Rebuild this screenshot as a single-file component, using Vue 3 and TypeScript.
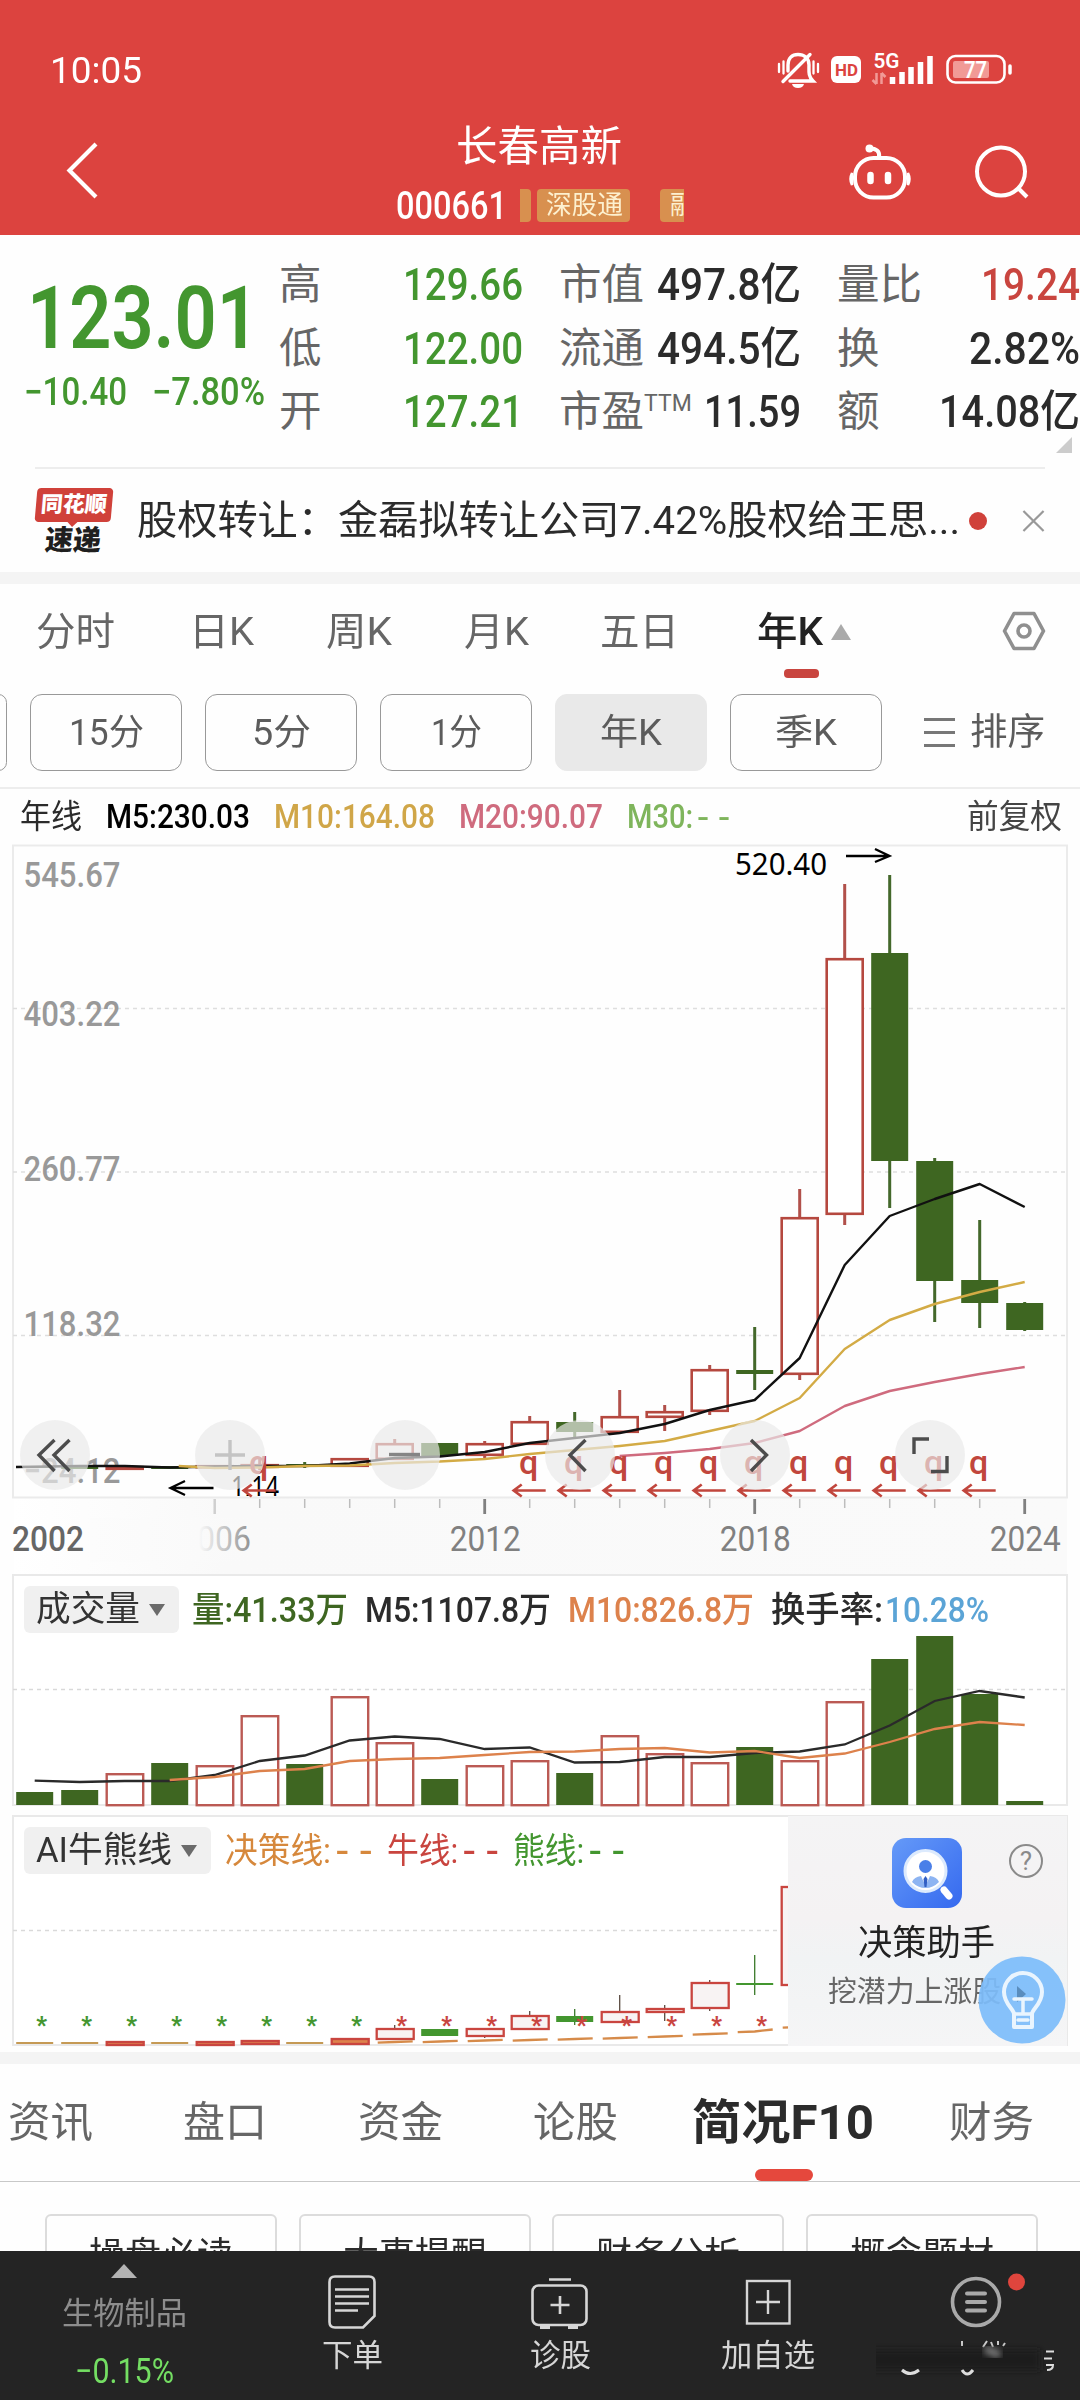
<script setup lang="ts">
interface Candle {
  up: boolean
  top: number
  bottom: number
  high: number
  low: number
}

// Condenses a label horizontally so that it fills exactly the given width.
const vFit = {
  mounted(el: HTMLElement, binding: { value: number }) {
    const natural = el.getBoundingClientRect().width
    el.style.transform = `scaleX(${binding.value / natural})`
    el.style.width = `${binding.value}px`
  },
}

const cx = (i: number): number => 34.7 + 45 * i

const c = (up: boolean, top: number, bottom: number, high = top, low = bottom): Candle => ({
  up, top, bottom, high, low,
})

const candles: Candle[] = [
  c(false, 1466, 1468), c(false, 1466, 1469), c(true, 1466, 1470), c(false, 1466, 1469),
  c(true, 1465, 1468), c(true, 1464, 1468, 1459, 1470), c(false, 1464, 1466, 1462, 1468),
  c(true, 1458, 1467), c(true, 1443, 1460, 1439, 1460), c(false, 1443, 1456),
  c(true, 1443, 1456, 1441, 1458), c(true, 1421, 1445, 1416, 1445), c(false, 1422, 1432, 1412, 1438),
  c(true, 1416, 1433, 1390, 1433), c(true, 1411, 1418, 1405, 1431), c(true, 1369, 1412, 1365, 1415),
  c(false, 1370, 1374, 1327, 1390), c(true, 1217, 1375, 1189, 1380), c(true, 958, 1215, 884, 1225),
  c(false, 953, 1161, 875, 1208), c(false, 1161, 1281, 1158, 1322), c(false, 1280, 1303, 1220, 1328),
  c(false, 1303, 1330, 1302, 1331),
]

const volumes: [boolean, number][] = [
  [false, 1792], [false, 1790], [true, 1773], [false, 1763], [true, 1765], [true, 1715],
  [false, 1764], [true, 1696], [true, 1742], [false, 1779], [true, 1765], [true, 1760],
  [false, 1773], [true, 1735], [true, 1753], [true, 1762], [false, 1747], [true, 1760],
  [true, 1701], [false, 1659], [false, 1636], [false, 1694], [false, 1801],
]

const aiCandles: { i: number; k: Candle }[] = [
  c(false, 2042, 2044), c(false, 2042, 2044), c(true, 2041, 2046), c(false, 2042, 2044),
  c(true, 2041, 2046), c(true, 2040, 2045), c(false, 2042, 2044), c(true, 2038, 2045),
  c(true, 2028, 2040, 2025, 2040), c(false, 2029, 2036), c(true, 2028, 2037, 2028, 2038),
  c(true, 2015, 2030, 2011, 2030), c(false, 2016, 2022, 2009, 2025), c(true, 2011, 2023, 1995, 2023),
  c(true, 2008, 2013, 2005, 2021), c(true, 1982, 2009, 1980, 2011), c(false, 1983, 1985, 1955, 1995),
  c(true, 1886, 1986),
].map((k, i) => ({ i, k }))

const line = (start: number, ys: number[]): string =>
  ys.map((y, n) => `${cx(start + n)},${y}`).join(' ')

const ma5 = '16,1467 ' + line(1, [1466, 1466, 1467.5, 1466.5, 1466, 1466, 1463.5, 1458, 1456.5, 1452,
  1443, 1438, 1433, 1424, 1410, 1400, 1358, 1265, 1216, 1199, 1184, 1207])
const ma10 = line(3.2, [1466]) + ' ' + line(4, [1468, 1467.5, 1466, 1465.5, 1463, 1461.5, 1459, 1454,
  1450, 1446, 1441, 1431, 1421, 1398, 1349, 1320, 1304, 1292, 1282])
const ma20 = line(13, [1456, 1453, 1449, 1443, 1431, 1406, 1391, 1382, 1374, 1367])
const vma5 = line(0, [1780.7, 1782, 1781, 1781, 1775, 1761, 1755.5, 1740.5, 1736.5, 1739, 1749,
  1747.5, 1762.5, 1762, 1757, 1757, 1753, 1751.5, 1744.5, 1725.5, 1701, 1691, 1697.5])
const vma10 = line(3, [1780, 1777, 1771, 1769, 1761, 1759, 1758, 1755, 1752, 1751.5, 1749, 1748,
  1752.5, 1751, 1758, 1753.5, 1742, 1729, 1722, 1725])

const priceLabels = [
  { text: '545.67', y: 887 }, { text: '403.22', y: 1026 }, { text: '260.77', y: 1181 },
  { text: '118.32', y: 1336 }, { text: '−24.12', y: 1483 },
]
const dividends = [5, 11, 12, 13, 14, 15, 16, 17, 18, 19, 20, 21]
const knobs = [55, 230, 405, 580, 755, 930]
const years = [
  { text: '2012', i: 10 }, { text: '2018', i: 16 }, { text: '2024', i: 22 },
]
const trend = [2042, 2041.5, 2040.5, 2040, 2039, 2038, 2036.5, 2034, 2031.5, 2027]

const facts = [
  ['高', '129.66', '市值', '497.8亿', '量比', '19.24'],
  ['低', '122.00', '流通', '494.5亿', '换', '2.82%'],
  ['开', '127.21', '市盈', '11.59', '额', '14.08亿'],
]
const capWidth = [144, 144, 97]
const lastWidth = [99, 111, 141]

const periods = [
  { text: '分时', w: 79 }, { text: '日K', w: 65 }, { text: '周K', w: 66 },
  { text: '月K', w: 65 }, { text: '五日', w: 79 },
]
const minutes = ['15分', '5分', '1分', '年K', '季K']
const minuteWidth = [75, 59, 51, 62, 62]
const cards = ['操盘必读', '大事提醒', '财务分析', '概念题材']
</script>

<template>
  <main class="screen">
    <header class="top">
      <div class="status">
        <span v-fit="92" class="clock fit">10:05</span>
        <svg class="status-icons" width="250" height="50" viewBox="770 45 250 50">
          <g fill="none" stroke="#fff" stroke-width="3.400" stroke-linecap="round">
            <path d="M790 81 H813 C808 76 809 71 809 65 C809 58 804 54.500 798 54.500 C792 54.500 788 58 788 65 V71" />
            <path d="M783 81.500 L810 54.500" />
            <path d="M779 64 v8 M783.500 61.500 v12 M813.500 61.500 v12 M818 64 v8" stroke-width="2.300" />
          </g>
          <path d="M792 84 h12 q-1 4 -6 4 t-6 -4z" fill="#fff" />
          <rect x="831" y="56" width="30" height="27" rx="6" fill="#fff" />
          <text x="835" y="75.500" font-size="16" font-weight="700" fill="#dc433f" textLength="23" lengthAdjust="spacingAndGlyphs">HD</text>
          <text x="873.500" y="68" font-size="20" font-weight="600" fill="#fff" textLength="26" lengthAdjust="spacingAndGlyphs">5G</text>
          <path d="M876.500 73 v11 M872.500 80 l4 4 M881.500 84 v-11 M881.500 73 l4 4" stroke="#f19a96" stroke-width="2.500" fill="none" />
          <path d="M892.500 84 v-7 M902 84 v-12 M911 84 v-17 M920.500 84 v-22 M930 84 v-28" stroke="#fff" stroke-width="5.500" />
          <rect x="947.500" y="56" width="57" height="26.500" rx="8" fill="none" stroke="#fff" stroke-width="2.600" />
          <rect x="953" y="61" width="36" height="17" rx="2" fill="#f19a96" />
          <path d="M1010 66 v7" stroke="#fff" stroke-width="3.500" stroke-linecap="round" />
          <text x="964" y="78" font-size="23" font-weight="600" fill="#fff" textLength="23" lengthAdjust="spacingAndGlyphs">77</text>
        </svg>
      </div>
      <div class="titlebar">
        <svg class="back" width="40" height="66" viewBox="62 137 40 66">
          <path d="M96 144 L69.500 170.500 L96 197" fill="none" stroke="#fff" stroke-width="4.200" />
        </svg>
        <div class="name">
          <h1 v-fit="166" class="fit">长春高新</h1>
          <div class="code">
            <span v-fit="111" class="fit digits">000661</span>
            <i class="tag sliver"></i>
            <span class="tag full"><span v-fit="77" class="fit">深股通</span></span>
            <span class="tag cut">融</span>
          </div>
        </div>
        <svg class="actions" width="200" height="76" viewBox="840 135 200 76">
          <g fill="none" stroke="#fff" stroke-width="4">
            <rect x="855" y="158" width="50" height="39.500" rx="18.500" />
            <path d="M879 157 C880 151 876 148.500 870 148.500" />
            <path d="M870.500 175 v6 M888 175 v6" stroke-width="6.500" stroke-linecap="round" />
            <circle cx="1001" cy="171.500" r="24" />
            <path d="M1018 188 L1027 197" />
          </g>
          <path d="M852 173 q-3 6 0 12z M908 173 q3 6 0 12z" fill="#fff" stroke="#fff" stroke-width="2.500" />
          <circle cx="869.500" cy="148.500" r="4" fill="#fff" />
        </svg>
      </div>
    </header>

    <section class="quote">
      <div class="price">
        <strong v-fit="232" class="fit">123.01</strong>
        <div class="change">
          <span v-fit="103" class="fit">−10.40</span>
          <span v-fit="113" class="fit">−7.80%</span>
        </div>
      </div>
      <div class="facts">
        <div v-for="(f, r) in facts" :key="r" class="fact">
          <span class="key">{{ f[0] }}</span>
          <span class="val green"><b v-fit="120" class="fit">{{ f[1] }}</b></span>
          <span class="key mid">{{ f[2] }}<sup v-if="r === 2">TTM</sup></span>
          <span class="val"><b v-fit="capWidth[r]" class="fit">{{ f[3] }}</b></span>
          <span class="key last">{{ f[4] }}</span>
          <span class="val" :class="{ red: r === 0 }"><b v-fit="lastWidth[r]" class="fit">{{ f[5] }}</b></span>
        </div>
        <i class="corner"></i>
      </div>
    </section>

    <section class="news">
      <div class="brand">
        <span class="brand-top">同花顺</span>
        <span class="brand-bottom">速递</span>
      </div>
      <span v-fit="823" class="fit headline">股权转让：金磊拟转让公司7.42%股权给王思...</span>
      <i class="dot"></i>
      <svg width="24" height="24" viewBox="0 0 24 24"><path d="M1.500 1.500 L22.500 22.500 M22.500 1.500 L1.500 22.500" stroke="#999" stroke-width="2.300" /></svg>
    </section>

    <nav class="periods">
      <span v-for="p in periods" :key="p.text" class="period"><span v-fit="p.w" class="fit">{{ p.text }}</span></span>
      <span class="period active"><span v-fit="66" class="fit">年K</span><i class="caret-up"></i></span>
      <svg width="46" height="46" viewBox="-23 -23 46 46">
        <path d="M-10 -17.500 H10 L19.500 0 L10 17.500 H-10 L-19.500 0 Z" fill="none" stroke="#8f8f8f" stroke-width="3.600" stroke-linejoin="round" />
        <circle r="6" fill="none" stroke="#8f8f8f" stroke-width="3.600" />
      </svg>
    </nav>

    <div class="minutes">
      <span class="chip ghost"></span>
      <span v-for="(m, n) in minutes" :key="m" class="chip" :class="{ on: n === 3 }"><span v-fit="minuteWidth[n]" class="fit">{{ m }}</span></span>
      <span class="sort"><i class="bars"></i><span v-fit="75" class="fit">排序</span></span>
    </div>

    <div class="legend">
      <span v-fit="62" class="fit">年线</span>
      <span v-fit="144" class="fit black">M5:230.03</span>
      <span v-fit="161" class="fit gold">M10:164.08</span>
      <span v-fit="144" class="fit rose">M20:90.07</span>
      <span v-fit="108" class="fit lime">M30:<span class="dash">--</span></span>
      <span v-fit="95" class="fit adjust">前复权</span>
    </div>

    <svg class="chart" width="1080" height="730" viewBox="0 844 1080 730">
      <defs>
        <linearGradient id="strip" x1="0" x2="1" y1="0" y2="0">
          <stop offset="0" stop-color="#fff" />
          <stop offset=".2" stop-color="#f9f9f9" />
          <stop offset="1" stop-color="#fafafa" />
        </linearGradient>
        <linearGradient id="fade" x1="0" x2="1" y1="0" y2="0">
          <stop offset="0" stop-color="#fcfcfc" />
          <stop offset=".64" stop-color="#fafafa" />
          <stop offset="1" stop-color="#f9f9f9" stop-opacity="0" />
        </linearGradient>
        <clipPath id="plot"><rect x="14" y="847" width="1053" height="649" /></clipPath>
      </defs>
      <rect x="14" y="1498" width="1053" height="76" fill="url(#strip)" />
      <rect x="13" y="845.500" width="1054" height="652" fill="none" stroke="#ebebeb" stroke-width="2" />
      <path d="M13 1008.500 H1067 M13 1172 H1067 M13 1335.500 H1067" stroke="#dedede" stroke-width="1.300" stroke-dasharray="4 4" />
      <g class="digits" fill="#999" font-size="35.500" font-weight="500">
        <text v-for="p in priceLabels" :key="p.text" x="23.500" :y="p.y" textLength="97" lengthAdjust="spacingAndGlyphs">{{ p.text }}</text>
      </g>

      <g v-for="(k, i) in candles" :key="i">
        <path :d="`M${cx(i)} ${k.high} V${k.top} M${cx(i)} ${k.bottom} V${k.low}`" :stroke="k.up ? '#b1504a' : '#44682b'" stroke-width="3" />
        <rect v-if="k.up" :x="cx(i) - 18" :y="k.top + 1.2" width="36" :height="Math.max(k.bottom - k.top - 2.4, 1)" fill="#fff" stroke="#b5483f" stroke-width="2.600" />
        <rect v-else :x="cx(i) - 18.500" :y="k.top" width="37" :height="k.bottom - k.top" fill="#3e6621" />
      </g>
      <g fill="none" stroke-width="2.400" stroke-linejoin="round">
        <polyline :points="ma20" stroke="#cf6b7e" />
        <polyline :points="ma5" stroke="#111" />
        <polyline :points="ma10" stroke="#d3ab45" />
      </g>
      <text x="735" y="875" font-size="30" textLength="92" lengthAdjust="spacingAndGlyphs" fill="#000" class="cjk">520.40</text>
      <path d="M846 856 H889 M875 849 L889.500 856 L875 862" fill="none" stroke="#000" stroke-width="2.300" />
      <g clip-path="url(#plot)">
        <text x="231" y="1498" font-size="31" textLength="48" lengthAdjust="spacingAndGlyphs" fill="#000" class="cjk">1.14</text>
      </g>
      <path d="M213.500 1488 H171 M185 1481 L170.500 1488 L185 1495" fill="none" stroke="#000" stroke-width="2.300" />
      <g v-for="d in dividends" :key="d" fill="none" stroke="#c1463d" stroke-width="2.700">
        <text :x="cx(d) - 1" y="1474" text-anchor="middle" font-size="34" font-weight="500" fill="#c1463d" stroke="none">q</text>
        <path :d="`M${cx(d) + 16} 1490.500 H${cx(d) - 16} M${cx(d) - 8} 1484.500 L${cx(d) - 16} 1490.500 L${cx(d) - 8} 1496.500`" />
      </g>

      <circle v-for="k in knobs" :key="k" :cx="k" cy="1455" r="35" fill="#e9e9e9" fill-opacity=".68" />
      <g fill="none" stroke="#4c4c4c" stroke-width="3.400">
        <path d="M54.500 1440 L39 1455 L54.500 1471 M69.500 1440 L54 1455 L69.500 1471" />
        <path d="M230 1440 V1470 M215 1455 H245" stroke="#c4c4c4" />
        <path d="M389 1454.500 H420" stroke="#858585" />
        <path d="M585.500 1440 L570 1455 L585.500 1471" />
        <path d="M751 1440 L766.500 1455 L751 1471" />
        <path d="M914 1454 V1439 H929 M931 1471.500 H947 V1456" />
      </g>

      <path v-for="n in 18" :key="n" :d="`M${cx(n + 4)} 1499 V1508`" stroke="#bdbdbd" stroke-width="1.500" />
      <path :d="`M${cx(4)} 1499 V1514`" stroke="#cfcfcf" stroke-width="2.500" />
      <path :d="`M${cx(10)} 1499 V1514 M${cx(16)} 1499 V1514 M${cx(22)} 1499 V1514`" stroke="#808080" stroke-width="2.800" />
      <g fill="#808080" font-size="35.500" class="digits">
        <text x="179" y="1551" textLength="72" lengthAdjust="spacingAndGlyphs">2006</text>
        <rect x="90" y="1518" width="170" height="44" fill="url(#fade)" />
        <text x="12" y="1551" textLength="72" lengthAdjust="spacingAndGlyphs" fill="#666" font-weight="500">2002</text>
        <text v-for="y in years" :key="y.text" :x="cx(y.i) - 35" y="1551" textLength="71" lengthAdjust="spacingAndGlyphs">{{ y.text }}</text>
      </g>
    </svg>

    <section class="panel">
      <svg width="1080" height="241" viewBox="0 1574 1080 241">
        <path d="M13 1805 V1575 H1067 V1805 Z" fill="#fff" stroke="#e9e9e9" stroke-width="2" />
        <path d="M13 1689.500 H1067" stroke="#d9d9d9" stroke-width="1.300" stroke-dasharray="4 4" />
        <g v-for="(v, i) in volumes" :key="i">
          <rect v-if="v[0]" :x="cx(i) - 18" :y="v[1] + 1.2" width="36.500" :height="1804 - v[1]" fill="#fff" stroke="#bb5a54" stroke-width="2.400" />
          <rect v-else :x="cx(i) - 18.500" :y="v[1]" width="37" :height="1805 - v[1]" fill="#3e6621" />
        </g>
        <polyline :points="vma5" fill="none" stroke="#2a2a2a" stroke-width="2.300" />
        <polyline :points="vma10" fill="none" stroke="#dd824c" stroke-width="2.300" />
      </svg>
      <div class="panel-head">
        <span class="picker"><span v-fit="104" class="fit">成交量</span><i class="caret-down"></i></span>
        <span v-fit="156" class="fit dgreen">量:41.33万</span>
        <span v-fit="186" class="fit ink">M5:1107.8万</span>
        <span v-fit="186" class="fit orange">M10:826.8万</span>
        <span v-fit="112" class="fit ink">换手率:</span>
        <span v-fit="104" class="fit sky">10.28%</span>
      </div>
    </section>

    <section class="panel ai">
      <svg width="1080" height="237" viewBox="0 1815 1080 237">
        <rect x="13" y="1816" width="1054" height="229" fill="#fff" stroke="#e9e9e9" stroke-width="2" />
        <path d="M13 1930.500 H788" stroke="#d9d9d9" stroke-width="1.300" stroke-dasharray="4 4" />
        <g v-for="{ i, k } in aiCandles" :key="i">
          <path :d="`M${cx(i)} ${k.high} V${k.top} M${cx(i)} ${k.bottom} V${k.low}`" :stroke="k.up ? '#5a4a40' : '#3b7a2a'" stroke-width="1.300" />
          <rect v-if="k.up" :x="cx(i) - 18" :y="k.top + 1" width="37" :height="Math.max(k.bottom - k.top - 2, 2)" :fill="i < 8 ? '#dd824c' : '#f8f3f3'" stroke="#c9453f" stroke-width="2.300" />
          <rect v-else :x="cx(i) - 18.500" :y="k.top" width="37" :height="k.bottom - k.top" :fill="i < 8 ? '#c59a55' : '#43962f'" />
        </g>
        <path v-for="(y, n) in trend" :key="n" :d="`M${cx(n + 8) - 17} ${y + .7} L${cx(n + 8)} ${y} L${cx(n + 8) + 18} ${y - (n > 7 ? 2 : .7)}`" fill="none" stroke="#d68b4a" stroke-width="2.300" />
        <g font-size="23" font-weight="900" text-anchor="middle">
          <text v-for="n in 17" :key="n" :x="41.500 + 45 * (n - 1)" y="2032.500" :fill="n < 9 ? '#43962f' : '#c9453f'">*</text>
        </g>
      </svg>
      <div class="panel-head">
        <span class="picker"><span v-fit="136" class="fit">AI牛熊线</span><i class="caret-down"></i></span>
        <span v-fit="153" class="fit amber">决策线:<span class="dash">--</span></span>
        <span v-fit="117" class="fit crimson">牛线:<span class="dash">--</span></span>
        <span v-fit="117" class="fit green">熊线:<span class="dash">--</span></span>
      </div>
      <aside class="helper">
        <svg class="app" width="70" height="70" viewBox="0 0 70 70">
          <defs>
            <linearGradient id="blue" x1="0" x2="1" y1="0" y2="1">
              <stop offset="0" stop-color="#659af8" />
              <stop offset="1" stop-color="#3569ef" />
            </linearGradient>
          </defs>
          <rect width="70" height="70" rx="14" fill="url(#blue)" />
          <circle cx="33.500" cy="33" r="20.500" fill="#fff" stroke="#dceafd" stroke-width="3" />
          <circle cx="33.500" cy="28.500" r="6.500" fill="#4a7fe8" />
          <path d="M20 44 Q22 39 29 38 L33.500 48 L38 38 Q45 39 47 44 Q41 50 33.500 50 Q26 50 20 44z" fill="#8db4f2" />
          <path d="M33.500 38 l2 3 l-1 8 h-2 l-1 -8z" fill="#315fc4" />
          <path d="M52 52 L57 58" stroke="#fff" stroke-width="7" stroke-linecap="round" />
        </svg>
        <svg class="ask" width="36" height="36" viewBox="-18 -18 36 36">
          <circle r="16" fill="none" stroke="#8a8a8a" stroke-width="2" />
          <text y="9" text-anchor="middle" font-size="26" fill="#8a8a8a">?</text>
        </svg>
        <span v-fit="137" class="fit helper-title">决策助手</span>
        <span v-fit="173" class="fit helper-sub">挖潜力上涨股</span>
        <svg class="bulb" width="88" height="88" viewBox="-44 -44 88 88">
          <circle r="43.500" fill="#7dbcfa" fill-opacity=".93" />
          <path d="M-5 -14 L4 -6 L-5 2z" fill="#4f7fae" opacity=".8" />
          <g fill="none" stroke="#eaf5fe" stroke-width="4" stroke-linejoin="round" stroke-linecap="round">
            <path d="M-8 27 V14 C-8 9 -18 4 -18 -8 A19 19 0 0 1 20 -8 C20 4 10 9 10 14 V27 Z" />
            <path d="M-8 -1 H10 M1 -1 V14 M-7 14 H9 M-4 20 H6" stroke-width="3.500" />
          </g>
        </svg>
      </aside>
    </section>

    <nav class="tabs">
      <span v-fit="85" class="fit">资讯</span>
      <span v-fit="84" class="fit">盘口</span>
      <span v-fit="85" class="fit">资金</span>
      <span v-fit="85" class="fit">论股</span>
      <span class="current"><b v-fit="182" class="fit">简况F10</b></span>
      <span v-fit="85" class="fit">财务</span>
    </nav>

    <div class="cards">
      <span v-for="t in cards" :key="t" class="card"><span v-fit="144" class="fit">{{ t }}</span></span>
    </div>

    <footer class="dock">
      <div class="sector">
        <i class="up"></i>
        <span v-fit="125" class="fit">生物制品</span>
        <b v-fit="99" class="fit">−0.15%</b>
      </div>
      <div class="item">
        <svg width="60" height="60" viewBox="322 2271 60 60" fill="none" stroke="#d6d6d6" stroke-width="2.600">
          <path d="M335 2276.500 H369 Q374.500 2276.500 374.500 2282 V2316 L363 2327.500 H335 Q329.500 2327.500 329.500 2322 V2282 Q329.500 2276.500 335 2276.500z" />
          <path d="M335 2289.500 H369 M335 2296.500 H369 M335 2303.500 H369 M335 2310.500 H358" stroke-width="2.400" />
        </svg>
        <span v-fit="61" class="fit">下单</span>
      </div>
      <div class="item">
        <svg width="60" height="60" viewBox="530 2271 60 60" fill="none" stroke="#d6d6d6" stroke-width="2.600">
          <rect x="532.500" y="2285.500" width="54" height="39.500" rx="6" />
          <path d="M549 2279.500 H571 M560 2296 V2314 M550.500 2305 H569.500" />
          <path d="M540 2327 H550 M568 2327 H578" stroke-width="4" />
        </svg>
        <span v-fit="61" class="fit">诊股</span>
      </div>
      <div class="item">
        <svg width="60" height="60" viewBox="738 2271 60 60" fill="none" stroke="#d6d6d6" stroke-width="2.400">
          <rect x="747" y="2281" width="42.500" height="42.500" />
          <path d="M768 2290 V2314 M756 2302 H780" />
        </svg>
        <span v-fit="94" class="fit">加自选</span>
      </div>
      <div class="item">
        <svg width="200" height="124" viewBox="876 2271 200 124" fill="none">
          <defs><filter id="smear" x="-20%" y="-50%" width="140%" height="200%"><feGaussianBlur stdDeviation="3" /></filter></defs>
          <circle cx="976" cy="2302" r="23.500" stroke="#a9a9a9" stroke-width="3.600" />
          <path d="M967 2293.500 H985 M967 2302 H985 M967 2310.500 H985" stroke="#a9a9a9" stroke-width="4" stroke-linecap="round" />
          <circle cx="1016.500" cy="2282" r="8.500" fill="#df453d" />
          <path d="M962 2341 v5 M983 2347 l4 -6 M993 2347 l-2 -5 M998 2341 v4 M1005 2343 l-2 3" stroke="#ccc" stroke-width="2" />
          <rect x="840" y="2350" width="200" height="20" fill="#1f1f1f" filter="url(#smear)" />
          <path d="M985 2349 L1000 2355" stroke="#777" stroke-width="8" filter="url(#smear)" />
          <path d="M902 2370 q8 7 17 0 M962 2370 q5 8 11 0" stroke="#ddd" stroke-width="3" />
          <path d="M1046 2351.500 h8 M1044 2358.500 h8 M1046 2365 h7 q0 5 -6 5" stroke="#ddd" stroke-width="2" />
        </svg>
      </div>
    </footer>
  </main>
</template>

<style>
body {
  margin: 0;
  background: #fff;
}
</style>

<style scoped>
.screen {
  width: 1080px;
  height: 2400px;
  overflow: hidden;
  display: flex;
  flex-direction: column;
  background: #fefefe;
  color: #2b2b2b;
  font-family: Roboto, "Noto Sans CJK SC", sans-serif;
  line-height: 1;
}
.screen > * { flex: none; box-sizing: border-box; }
svg { display: block; }
.cjk { font-family: "Noto Sans", "Noto Sans CJK SC", sans-serif; }
.fit {
  display: inline-block;
  flex: none;
  white-space: nowrap;
  transform-origin: 0 50%;
}
.dash { font-family: "Liberation Mono", monospace; font-size: 1.15em; line-height: 0; letter-spacing: 1px; }

.top { height: 235px; background: #dc433f; color: #fff; }
.status { height: 95px; padding: 45px 60px 0 50px; box-sizing: border-box; display: flex; justify-content: space-between; align-items: center; }
.clock { font-size: 37px; }
.titlebar { height: 140px; display: grid; grid-template-columns: 62px 40px 294px 288px 156px 200px; align-items: start; }
.back { grid-column: 2; margin-top: 42px; }
.name { grid-column: 4; }
.actions { grid-column: 6; margin-top: 40px; }
h1 { margin: 31px 0 0 60px; font-size: 41.500px; line-height: 42px; font-weight: 400; }
.code { display: flex; height: 34px; margin-top: 20px; align-items: center; overflow: hidden; }
.code .digits { font-size: 38px; margin-right: 13px; font-weight: 500; line-height: 34px; padding-top: 1px; }
.tag { height: 33px; background: #d8904f; color: #fdf0cf; font-size: 26px; line-height: 33px; flex: none; }
.sliver { width: 11px; margin-right: 6px; border-radius: 0 4px 4px 0; }
.full { width: 84px; padding-left: 9px; border-radius: 4px; margin-right: 30px; }
.cut { width: 14px; padding-left: 10px; overflow: hidden; border-radius: 4px 0 0 4px; }

.quote { height: 232px; display: grid; grid-template-columns: 279px 801px; }
.price { color: #43962f; padding: 39px 0 0 27px; }
.price strong { font-size: 88px; line-height: 88px; font-weight: 600; }
.change { display: flex; gap: 25px; margin: 11px 0 0 -3px; font-size: 38px; line-height: 38px; font-weight: 500; }
.facts { position: relative; padding-top: 18px; }
.fact { height: 63.500px; line-height: 64px; display: grid; grid-template-columns: 64px 180px 125px 153px 115px 164px; align-items: center; font-size: 42.500px; }
.key { color: #666; white-space: nowrap; }
.mid { padding-left: 36px; }
.last { padding-left: 36px; }
.key sup { font-size: 23px; line-height: 0; vertical-align: 15px; }
.val { text-align: right; color: #2b2b2b; font-size: 44px; white-space: nowrap; }
.val b { font-weight: 500; text-align: left; }
.fact .val:last-child { justify-self: end; }
.val.green, .green { color: #43962f; }
.val.red { color: #c9453f; }
.corner { position: absolute; right: 8px; top: 202px; border-left: 16px solid transparent; border-bottom: 16px solid #ccc; }

.news { height: 105px; margin: 0 35px; border-top: 2px solid #ededed; display: flex; align-items: center; }
.brand { width: 102px; height: 66px; font-weight: 900; position: relative; flex: none; }
.brand-top, .brand-bottom { display: block; transform: skewX(-5deg); white-space: nowrap; }
.brand-top { width: 76px; height: 34px; margin-left: 1px; background: #d0413a; color: #fff; border-radius: 4px; font-size: 22px; line-height: 33px; text-align: center; }
.brand-top::after { content: ""; position: absolute; left: 32px; top: 33px; border: 6px solid transparent; border-top-color: #d0413a; }
.brand-bottom { color: #1f1f1f; font-size: 28px; line-height: 28px; width: 76px; text-align: center; margin-top: 5px; }
.headline { font-size: 39.500px; line-height: 50px; }
.dot { width: 18px; height: 18px; border-radius: 50%; background: #d0413a; margin: 0 35px 0 9px; flex: none; }

.periods { height: 122px; border-top: 12px solid #f4f4f4; padding: 2px 0 16px 36px; display: grid; grid-template-columns: 153px 137px 138px 136px 157px 244px 46px; align-items: center; font-size: 39px; color: #666; }
.periods svg { position: relative; top: -1px; }
.period { display: flex; align-items: center; }
.active { color: #222; font-weight: 500; position: relative; }
.active::after { content: ""; position: absolute; left: 27px; top: 56px; width: 35px; height: 9px; border-radius: 4px; background: #c9453f; }
.caret-up { border: 10px solid transparent; border-top: 0; border-bottom: 16px solid #aaa; margin-left: 8px; }

.minutes { height: 95px; border-bottom: 2px solid #ededed; display: flex; align-items: flex-start; }
.chip { width: 152px; height: 77px; margin-right: 23px; padding-top: 1px; box-sizing: border-box; border: 1.500px solid #999; border-radius: 12px; display: flex; align-items: center; justify-content: center; font-size: 36px; color: #5c5c5c; }
.ghost { width: 17px; margin-left: -10px; }
.on { background: #e9e9e9; border-color: #e9e9e9; }
.sort { display: flex; align-items: center; height: 77px; font-size: 37px; color: #5c5c5c; margin-left: 19px; }
.bars { width: 31px; height: 23px; border-top: 3px solid #777; border-bottom: 3px solid #777; background: linear-gradient(#777, #777) center / 100% 3px no-repeat; margin-right: 15px; }

.legend { height: 55px; padding: 1px 18px 0 20px; display: flex; align-items: center; gap: 24px; font-size: 32.500px; line-height: 54px; }
.black { color: #000; font-weight: 500; }
.gold { color: #d0a648; font-weight: 500; }
.rose { color: #cf6b7e; font-weight: 500; }
.lime { color: #7fb55c; font-weight: 500; }
.adjust { margin-left: auto; color: #444; }

.panel { display: grid; height: 241px; }
.panel > * { grid-area: 1 / 1; }
.ai { height: 237px; }
.panel-head { align-self: start; margin: 12px 0 0 24px; display: flex; align-items: center; height: 47px; font-size: 35.500px; }
.panel-head > .fit { line-height: 47px; padding-top: 1px; }
.picker { display: flex; align-items: center; height: 47px; box-sizing: border-box; padding: 0 14px 0 12px; margin-right: 13px; border-radius: 6px; background: #f0f0f0; color: #333; }
.caret-down { border: 8.500px solid transparent; border-bottom: 0; border-top: 12px solid #6b6b6b; margin-left: 9px; }
.panel-head > .fit { margin-right: 17px; }
.panel-head > .fit:nth-child(5) { margin-right: 2px; }
.ai .picker { margin-right: 14px; }
.ai .panel-head > .fit { margin-right: 9px; }
.dgreen { color: #3e6621; font-weight: 500; }
.ink { color: #2b2b2b; font-weight: 500; }
.orange { color: #dd824c; font-weight: 500; }
.sky { color: #5ba4d6; font-weight: 500; }
.amber { color: #d6883c; }
.crimson { color: #c9453f; }
.helper { position: relative; justify-self: end; align-self: start; margin: 1px 13px 0 0; width: 279px; height: 230px; box-sizing: border-box; padding-top: 22px; background: linear-gradient(180deg, #f4f4f5 0%, #f4f2f3 45%, #f1f3f4 62%, #f5f5f6 100%); display: flex; flex-direction: column; align-items: center; }
.app { margin-right: 1px; }
.ask { position: absolute; left: 220px; top: 27px; }
.helper-title { font-size: 35px; line-height: 40px; margin: 16px 2px 0 0; color: #222; }
.helper-sub { font-size: 29px; line-height: 34px; margin: 11px 26px 0 0; color: #666; }
.bulb { position: absolute; left: 190px; top: 140px; }

.tabs { height: 130px; border-top: 12px solid #f4f4f4; border-bottom: 1.500px solid #c8c8c8; display: grid; grid-template-columns: 175px 175px 175px 159px 257px 85px; justify-items: start; padding: 1px 0 0 8px; align-items: center; font-size: 42.500px; line-height: 50px; color: #666; }
.current { color: #2b2b2b; font-size: 48px; position: relative; }
.current b { font-weight: 700; }
.current::after { content: ""; position: absolute; left: 63px; top: 71px; width: 58px; height: 12px; border-radius: 6px; background: #e5483d; }

.cards { height: 69px; padding: 32px 0 0 45px; display: flex; gap: 21.500px; overflow: hidden; }
.card { width: 232px; height: 90px; box-sizing: border-box; border: 2px solid #dcdcdc; border-radius: 6px; padding-top: 20px; text-align: center; font-size: 36px; line-height: 40px; color: #2b2b2b; }

.dock { height: 149px; background: #242424; display: grid; grid-template-columns: 248px 208px 208px 208px 208px; color: #d6d6d6; font-size: 31px; line-height: 36px; }
.sector { display: flex; flex-direction: column; align-items: center; color: #8d8d8d; }
.up { border: 13px solid transparent; border-top: 0; border-bottom: 14px solid #b3b3b3; margin: 13px 0 18px; }
.sector b { margin-top: 22px; font-weight: 400; font-size: 35px; color: #74de63; }
.item { display: flex; flex-direction: column; align-items: center; padding-top: 20px; }
.item span { margin-top: 7px; }
</style>
